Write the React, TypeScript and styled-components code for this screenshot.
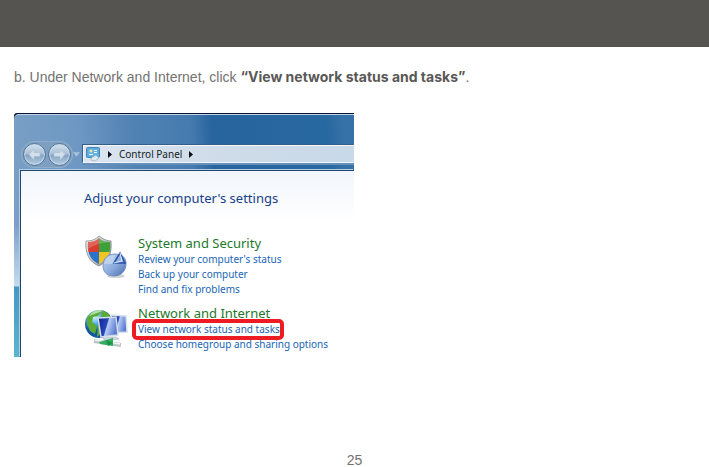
import React from 'react';
import styled, { createGlobalStyle } from 'styled-components';

const GlobalStyle = createGlobalStyle`
  * { box-sizing: border-box; }
  body { margin: 0; background: #fff; color: #595856; font-family: "Liberation Sans", Arial, sans-serif; }
`;

const Page = styled.div`
  display: flex;
  flex-direction: column;
  min-height: 100vh;
`;
const Banner = styled.header`
  height: 47px;
  background: #565451;
`;
const Content = styled.main`
  flex: 1;
  padding: 20px 14px;
`;
const Step = styled.p`
  margin: 0 0 26px;
  color: #73726f;
  font: 400 14px/20px "Liberation Sans", Arial, sans-serif;
  strong { color: #595856; font-weight: 700; font-family: Inter, "Liberation Sans", sans-serif; }
`;
const Footer = styled.footer`
  color: #73726f;
  text-align: center;
  font: 400 14px/14px "Liberation Sans", Arial, sans-serif;
`;

const Frame = styled.section`
  max-width: 340px;
  background: #071330;
  border-top-left-radius: 3px;
  font-family: "Noto Sans", "Open Sans", sans-serif;
`;
const Panel = styled.div`
  padding-left: 6px;
  border-top: 1px solid #071330;
  border-top-left-radius: 6px;
  background:
    linear-gradient(#7aa3cf00 0 58px, #7b9fca 110px, #c6dcee 172px, #4798c0 173px, #5ab5cf) left / 6px 100% no-repeat,
    linear-gradient(86deg, #7ba0c5 0%, #6e98c3 22%, #5082b4 38%, #467bb0 54%, #28649e 60%, #2868a0 92%, #3672a7 97%);
`;
const NavRow = styled.nav`
  display: flex;
  align-items: center;
  height: 56px;
  margin-left: -6px;
  padding: 23px 0 0 8px;
  border-top: 1px solid #c3d5e8;
  border-top-left-radius: 5px;
`;
const RoundButtons = styled.div`
  display: flex;
  gap: 2px;
  padding: 1px;
  border-radius: 13px;
  background: #7e9fc0;
  box-shadow: 0 0 0 1px #90aeca;
`;
const RoundButton = styled.button`
  display: flex;
  width: 23px;
  height: 23px;
  padding: 3px;
  border: 1px solid #55789d;
  border-radius: 50%;
  background: linear-gradient(#d5e1ed, #a8bfd6 48%, #84a3c2 52%, #b5cde2);
  box-shadow: inset 0 0 1px 1px #c7d9e9;
  svg { width: 15px; height: 15px; }
`;
const History = styled.button`
  display: flex;
  align-items: center;
  width: 11px;
  height: 20px;
  padding: 0 0 0 1px;
  border: 0;
  background: none;
`;
const AddressBar = styled.div`
  flex: 1;
  display: flex;
  align-items: center;
  height: 18px;
  padding-left: 1px;
  border: solid #f0f6fb;
  border-width: 1px 0 1px 1px;
  background: linear-gradient(90deg, #dce5f0, #cedbe8 55%, #c8d9e9);
  box-shadow: -1px -1px 0 #355f88, 0 2px 0 #6690b7;
`;
const Arrow = styled.svg`
  width: 4px;
  height: 7px;
  margin: 0 7px;
`;
const Crumb = styled.a`
  color: #151c26;
  font-size: 10px;
  line-height: 16px;
  text-decoration: none;
  white-space: nowrap;
`;
const Body = styled.div`
  padding: 18px 8px 5px 63px;
  border: solid #20466d;
  border-width: 1px 0 0 1px;
  background: linear-gradient(#f1f6fc, #fff 50px);
  box-shadow: -1px -1px 0 #b4cfe5;
`;
const Title = styled.h1`
  margin: 0 0 28px;
  color: #174087;
  font-size: 13px;
  font-weight: 400;
  line-height: 18px;
`;
const Category = styled.section`
  display: grid;
  grid-template-columns: 54px 1fr;
  margin-bottom: 8px;
  &:last-child { margin-bottom: 0; }
`;
const Picture = styled.svg`
  width: 44px;
  height: 44px;
`;
const Links = styled.div`
  display: flex;
  flex-direction: column;
  align-items: flex-start;
`;
const Heading = styled.h2`
  margin: 0;
  color: #1b792b;
  font-size: 13px;
  font-weight: 400;
  line-height: 17px;
`;
const TaskLink = styled.a<{ $marked?: boolean }>`
  position: relative;
  color: #2065b5;
  font-size: 10px;
  line-height: 15px;
  text-decoration: none;
  white-space: nowrap;
  &::after {
    content: ${p => (p.$marked ? '""' : 'none')};
    position: absolute;
    inset: -3px -4px -3px -6px;
    border: 4px solid #ed1c24;
    border-radius: 5px;
  }
`;

const BackIcon = () => (
  <svg viewBox="0 0 15 15"><path d="M7 2 2 7.500l5 5.500v-3.500h6v-4H7z" fill="#d3e0ec" stroke="#a3bad0" strokeWidth=".5" /></svg>
);
const ForwardIcon = () => (
  <svg viewBox="0 0 15 15"><path d="m8 2 5 5.500L8 13v-3.500H2v-4h6z" fill="#d3e0ec" stroke="#a3bad0" strokeWidth=".5" /></svg>
);
const Chevron = () => (
  <Arrow viewBox="0 0 4 7"><path d="M0 0v7l4-3.500z" fill="#0b1018" /></Arrow>
);
const PanelIcon = () => (
  <svg width="16" height="16" viewBox="0 0 16 16">
    <rect x="1.500" y="1.500" width="13" height="10" rx="1" fill="#5aa9e0" stroke="#4486b8" />
    <path d="M3 3h10v7H3z" fill="#62b1e6" />
    <circle cx="6" cy="5" r="1.500" fill="#f0df91" />
    <path d="M9 4h3v1H9zM9 6h3v1H9zM4 8h4v1H4z" fill="#eff9ff" />
    <path d="m6 12 5-3 3 3-4 3-4-1z" fill="#dce8ef" stroke="#829cac" strokeWidth=".5" />
  </svg>
);

const SecurityIcon = () => (
  <Picture viewBox="0 0 44 44" aria-hidden="true">
    <defs>
      <linearGradient id="rim" x2="1" y2="1"><stop stopColor="#fafafa" /><stop offset="1" stopColor="#858e94" /></linearGradient>
      <linearGradient id="disc" x2="1" y2="1"><stop stopColor="#c2d8f2" /><stop offset=".55" stopColor="#88a9db" /><stop offset="1" stopColor="#496bae" /></linearGradient>
      <clipPath id="shield"><path d="M15 3c3 3 7 4 11 4 1 11-2 18-11 22C6 25 3 18 4 7c4 0 8-1 11-4z" /></clipPath>
    </defs>
    <path d="M15 1c4 3 8 5 12 5 1 13-2 20-12 25C5 27 1 18 2 6c5 0 9-1 13-5z" fill="url(#rim)" stroke="#83898c" strokeWidth=".8" />
    <g clipPath="url(#shield)">
      <path d="M2 2h13v15H2z" fill="#d93c30" />
      <path d="M15 2h14v15H15z" fill="#3da038" />
      <path d="M2 17h13v15H2z" fill="#2b72ca" />
      <path d="M15 17h14v15H15z" fill="#f2c41f" />
      <path d="M2 2h28v5Q14 7 4 14z" fill="#fff" opacity=".2" />
    </g>
    <ellipse cx="32" cy="41" rx="9" ry="2" fill="#a6a7a7" opacity=".5" />
    <path d="M19 31c0-8 5-12 12-12 8 0 11 4 11 10s-4 12-12 12c-7 0-11-4-11-10z" fill="url(#disc)" stroke="#6888bd" strokeWidth=".8" />
    <path d="M20 29c2-6 6-9 11-9l-1 9z" fill="#c4d8f1" opacity=".7" />
    <path d="m36 18 5 10H30z" fill="#91b1e1" stroke="#244fa5" strokeWidth="1.500" />
    <path d="m36 18 2 8-8 2" fill="none" stroke="#e4effc" />
  </Picture>
);

const NetworkIcon = () => (
  <Picture viewBox="-1 -4 44 44" aria-hidden="true">
    <defs>
      <radialGradient id="globe" cx=".35" cy=".25"><stop stopColor="#d7f5fe" /><stop offset=".5" stopColor="#4daedd" /><stop offset="1" stopColor="#1257a1" /></radialGradient>
      <linearGradient id="screen" x2="1" y2=".3"><stop stopColor="#101f98" /><stop offset=".5" stopColor="#2948b8" /><stop offset=".55" stopColor="#b5cdf5" /><stop offset="1" stopColor="#5c7bd0" /></linearGradient>
    </defs>
    <circle cx="14" cy="15" r="14" fill="url(#globe)" />
    <path d="M2 9C5 3 11 0 17 2l-4 5-5 1-1 5 5 4-2 8-5-3-3-7zM17 1l7 4 2 5-6 2-4-4zM13 16l6 1-2 7-5 4z" fill="#5eaa37" />
    <path d="M4 7c4-6 10-7 14-5-4 1-8 3-14 5z" fill="#e4ffe5" opacity=".6" />
    <path d="m26 6 15 1 1 16-14 1z" fill="url(#screen)" stroke="#d7e1e8" strokeWidth="1.500" />
    <path d="m13 9 18-1 2 18-17 2z" fill="url(#screen)" stroke="#d4dee7" strokeWidth="1.500" />
    <path d="m18 29 13-1 3 2-14 2z" fill="#d0dae3" stroke="#95a8b6" strokeWidth=".5" />
    <path d="m9 32 27 4" stroke="#bcc5c5" strokeWidth="4" />
    <path d="m10 31 25 4" stroke="#f1f4f2" strokeWidth="1.500" />
    <path d="m14 33 14-4v8l-13-2z" fill="#36ac61" />
    <path d="m21 31 7 3-5 3" fill="#159548" />
  </Picture>
);

export default function App() {
  return (
    <Page>
      <GlobalStyle />
      <Banner />
      <Content>
        <Step>b. Under Network and Internet, click <strong>“View network status and tasks”</strong>.</Step>
        <Frame>
          <Panel>
            <NavRow>
              <RoundButtons>
                <RoundButton aria-label="Back"><BackIcon /></RoundButton>
                <RoundButton aria-label="Forward"><ForwardIcon /></RoundButton>
              </RoundButtons>
              <History aria-label="Recent pages">
                <svg width="7" height="5" viewBox="0 0 8 5"><path d="M0 0h8L4 5z" fill="#a9c3dc" /></svg>
              </History>
              <AddressBar>
                <PanelIcon />
                <Chevron />
                <Crumb href="#">Control Panel</Crumb>
                <Chevron />
              </AddressBar>
            </NavRow>
            <Body>
              <Title>Adjust your computer's settings</Title>
              <Category>
                <SecurityIcon />
                <Links>
                  <Heading>System and Security</Heading>
                  <TaskLink href="#">Review your computer's status</TaskLink>
                  <TaskLink href="#">Back up your computer</TaskLink>
                  <TaskLink href="#">Find and fix problems</TaskLink>
                </Links>
              </Category>
              <Category>
                <NetworkIcon />
                <Links>
                  <Heading>Network and Internet</Heading>
                  <TaskLink href="#" $marked>View network status and tasks</TaskLink>
                  <TaskLink href="#">Choose homegroup and sharing options</TaskLink>
                </Links>
              </Category>
            </Body>
          </Panel>
        </Frame>
      </Content>
      <Footer>25</Footer>
    </Page>
  );
}
